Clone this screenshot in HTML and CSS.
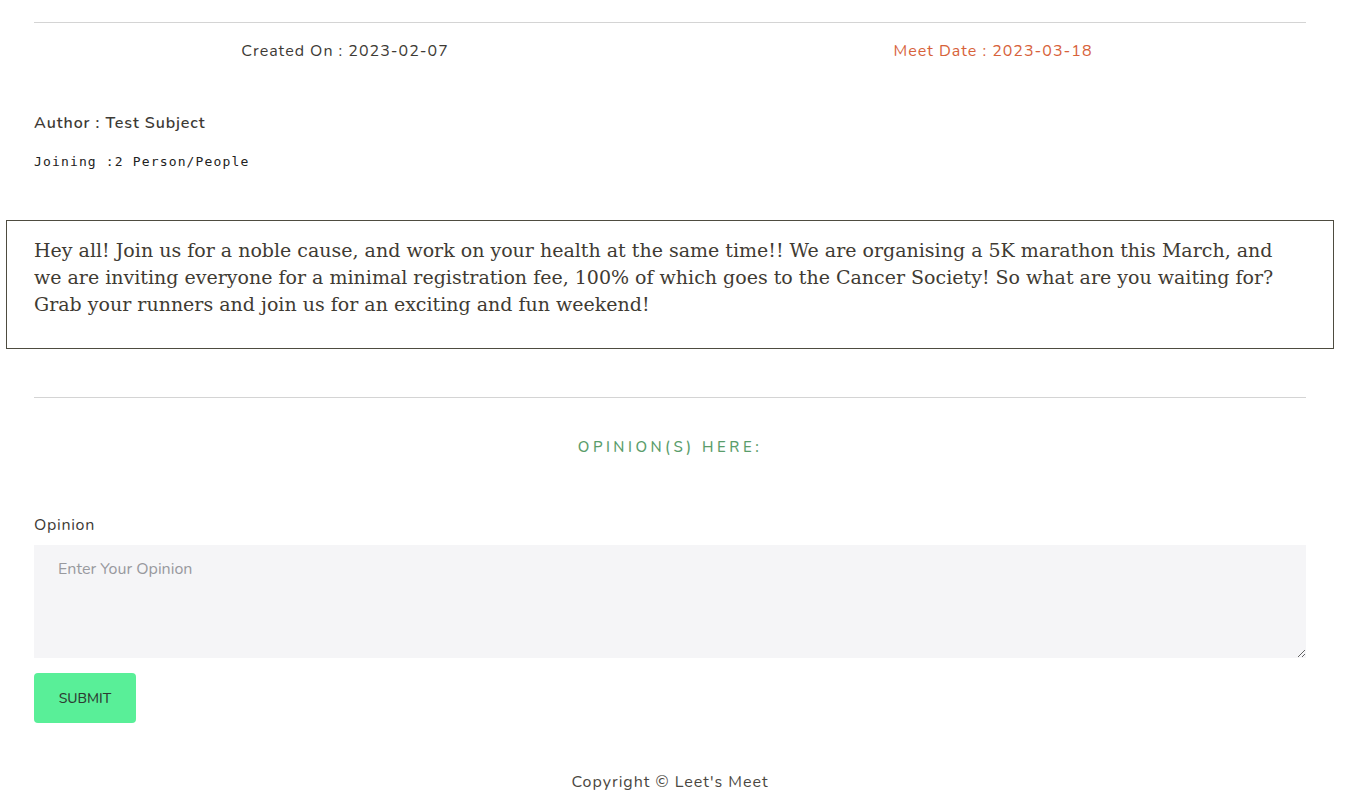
FILE: index.html
```html
<!DOCTYPE html>
<html>
<head>
<meta charset="utf-8">
<link rel="stylesheet" href="styles.css">
</head>
<body>
<div class="wrap">
  <hr class="rule top">
  <div class="dates">
    <div class="created">Created On : 2023-02-07</div>
    <div class="meet">Meet Date : 2023-03-18</div>
  </div>
  <div class="author">Author : Test Subject</div>
  <div class="joining">Joining :2 Person/People</div>
</div>
<div class="desc">
  <p>Hey all! Join us for a noble cause, and work on your health at the same time!! We are organising a 5K marathon this March, and we are inviting everyone for a minimal registration fee, 100% of which goes to the Cancer Society! So what are you waiting for? Grab your runners and join us for an exciting and fun weekend!</p>
</div>
<div class="wrap">
  <hr class="rule mid">
  <h3 class="op-title">OPINION(S) HERE:</h3>
  <form class="op-form">
    <label class="op-label" for="op">Opinion</label>
    <textarea id="op" class="op-input" placeholder="Enter Your Opinion"></textarea>
    <button type="button" class="submit">SUBMIT</button>
  </form>
  <footer class="foot">Copyright © Leet's Meet</footer>
</div>
</body>
</html>
```
FILE: styles.css
```css
html, body {
  margin: 0;
  padding: 0;
  background: #fff;
}
body {
  font-family: "Nunito", "Noto Sans", "Open Sans", sans-serif;
  color: #3d3a35;
}
.wrap {
  padding: 0 40px 0 34px;
}
.rule {
  border: 0;
  border-top: 1px solid #d4d4d4;
  margin: 0;
}
.rule.top {
  margin-top: 22px;
}
.dates {
  display: grid;
  grid-template-columns: 1fr 1fr;
  margin-top: 17px;
  font-size: 16px;
  letter-spacing: 1px;
  line-height: 22px;
}
.created {
  text-align: center;
  padding-right: 14px;
}
.meet {
  text-align: center;
  color: #d7623a;
  padding-left: 10px;
}
.author {
  margin-top: 50px;
  font-size: 16px;
  font-weight: 600;
  letter-spacing: 0.9px;
  line-height: 22px;
}
.joining {
  margin-top: 20px;
  font-family: "DejaVu Sans Mono", monospace;
  font-size: 13px;
  letter-spacing: 1.15px;
  line-height: 16px;
  color: #222;
}
.desc {
  margin: 50px 12px 0 6px;
  border: 1px solid #4e4c40;
  padding: 16px 40px 30px 27px;
}
.desc p {
  margin: 0;
  font-family: "DejaVu Serif", "Liberation Serif", serif;
  font-size: 19px;
  line-height: 27px;
  color: #3f3b33;
}
.rule.mid {
  margin-top: 48px;
}
.op-title {
  margin: 38px 0 0;
  text-align: center;
  font-size: 15px;
  font-weight: 500;
  letter-spacing: 3.5px;
  color: #5a9d6b;
  line-height: 22px;
}
.op-form {
  display: flex;
  flex-direction: column;
  align-items: flex-start;
  margin-top: 56px;
}
.op-label {
  font-size: 16px;
  letter-spacing: 0.7px;
  line-height: 22px;
}
.op-input {
  box-sizing: border-box;
  width: 100%;
  height: 113px;
  margin-top: 9px;
  border: 0;
  background: #f5f5f7;
  padding: 13px 24px;
  font-family: inherit;
  font-size: 16px;
  color: #333;
  resize: vertical;
  outline: none;
}
.op-input::placeholder {
  color: #98999e;
}
.submit {
  margin-top: 15px;
  width: 102px;
  height: 50px;
  border: 0;
  border-radius: 4px;
  background: #59ef98;
  color: #2d3b33;
  font-family: inherit;
  font-size: 14px;
  font-weight: 500;
  cursor: pointer;
}
.foot {
  margin-top: 48px;
  text-align: center;
  font-size: 16px;
  letter-spacing: 1px;
  line-height: 22px;
  color: #4a4741;
}
```
